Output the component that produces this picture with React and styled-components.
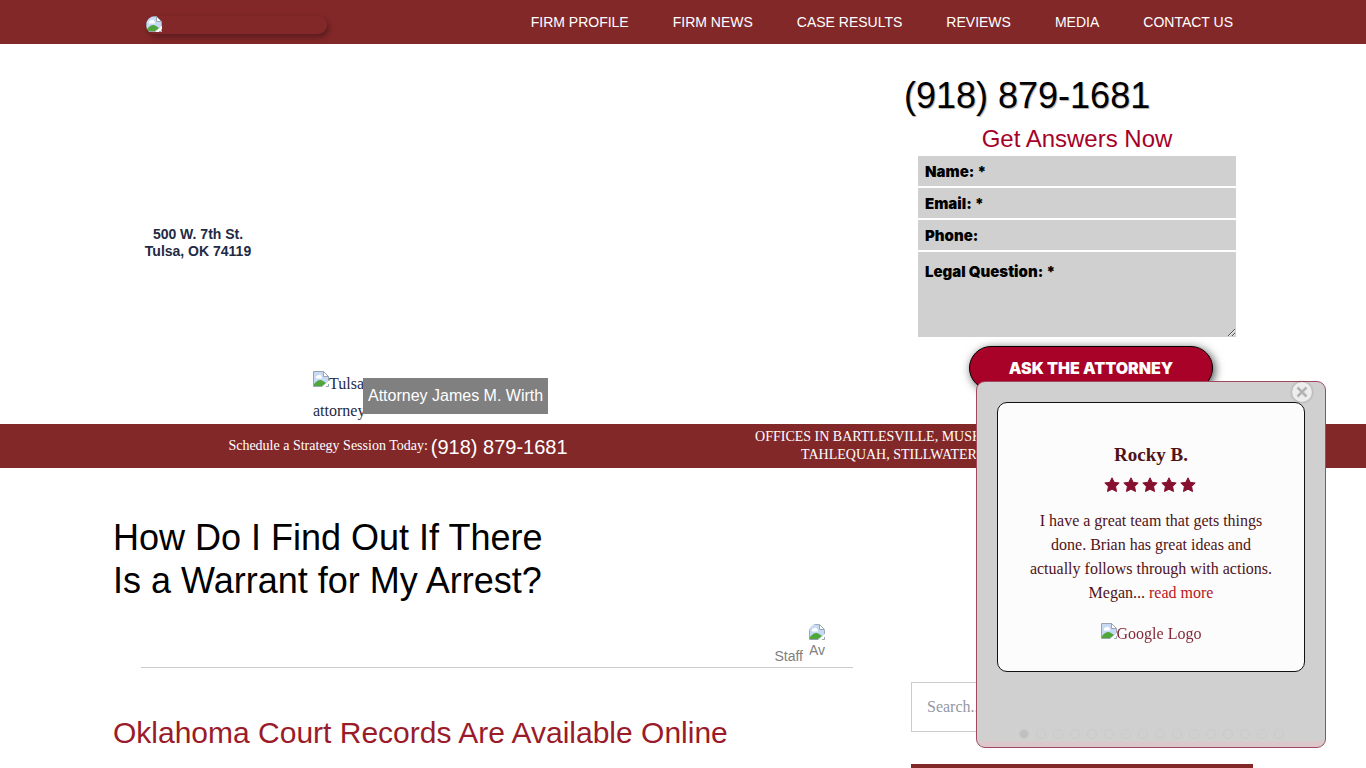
import React, { useState } from 'react';
import styled, { createGlobalStyle } from 'styled-components';

const SANS = '"Liberation Sans", Arial, sans-serif';
const SERIF = '"Liberation Serif", "Times New Roman", serif';
const HEAVY = '"Arial Black", Inter, sans-serif';

const GlobalStyle = createGlobalStyle`
  *, *::before, *::after {
    box-sizing: border-box;
  }

  body {
    margin: 0;
    background: #fff;
    color: #1f2a44;
    font-family: ${SERIF};
    font-size: 16px;
    overflow: hidden;
  }

  h1, h2, h3, p {
    margin: 0;
    font-weight: 400;
  }

  a {
    color: inherit;
    text-decoration: none;
  }
`;

const Page = styled.div`
  height: 100vh;
  overflow: hidden;
`;

const Container = styled.div`
  max-width: 1140px;
  margin: 0 auto;
`;

const Header = styled.header`
  background: #832829;
`;

const HeaderInner = styled(Container)`
  display: flex;
  align-items: center;
  justify-content: space-between;
  height: 44px;
  padding: 0 20px 0 33px;
`;

const Logo = styled.a`
  display: block;
  width: 181px;
  height: 18px;
  margin-top: 6px;
  border-radius: 10px;
  overflow: hidden;
  box-shadow: 2px 3px 6px rgba(0, 0, 0, 0.35);
`;

const Nav = styled.nav`
  display: flex;
  gap: 44px;
  color: #fff;
  font-family: ${SANS};
  font-size: 14px;
  line-height: 20px;
`;

const HeroInner = styled(Container)`
  display: grid;
  grid-template-columns: 170px 1fr 352px;
  height: 380px;
`;

const Address = styled.address`
  padding-top: 182px;
  font-family: ${SANS};
  font-size: 14px;
  font-style: normal;
  font-weight: 700;
  line-height: 17px;
  text-align: center;
`;

const Attorney = styled.div`
  display: flex;
  align-items: flex-start;
  align-self: end;
  padding-left: 30px;
`;

const AltBox = styled.div`
  width: 50px;
  line-height: 27px;
  white-space: nowrap;

  svg {
    vertical-align: 2px;
  }
`;

const AttorneyName = styled.div`
  margin-top: 8px;
  padding: 0 5px;
  background: #808080;
  color: #fff;
  font-family: ${SANS};
  font-size: 16px;
  line-height: 36px;
`;

const Contact = styled.div`
  padding-top: 30px;
`;

const BigPhone = styled.a`
  display: block;
  padding-left: 3px;
  color: #000;
  font-family: ${SANS};
  font-size: 36px;
  line-height: 44px;
  text-shadow: 1px 1px 1px #b0b0b0;
`;

const Form = styled.form`
  display: flex;
  flex-direction: column;
  gap: 2px;
  padding: 6px 17px 0;
`;

const FormTitle = styled.h3`
  color: #a50229;
  font-family: ${SANS};
  font-size: 24px;
  line-height: 30px;
  text-align: center;
`;

const Field = styled.input`
  width: 100%;
  height: 30px;
  padding: 0 7px;
  border: 0;
  border-radius: 0;
  background: #d0d0d0;
  font-family: ${HEAVY};
  font-size: 15px;
  font-weight: 900;

  &::placeholder {
    color: #000;
    opacity: 1;
  }
`;

const Question = styled(Field)`
  height: 85px;
  padding: 10px 7px;
  resize: vertical;
`;

const AskButton = styled.button`
  align-self: flex-end;
  width: 244px;
  height: 44px;
  margin: 7px 23px 0 0;
  border: 1px solid #000;
  border-radius: 22px;
  background: #a80229;
  box-shadow: 2px 2px 10px rgba(0, 0, 0, 0.7);
  color: #fff;
  font-family: ${HEAVY};
  font-size: 16px;
  font-weight: 900;
`;

const Banner = styled.section`
  background: #832829;
  color: #fff;
`;

const BannerInner = styled(Container)`
  display: flex;
  align-items: center;
  height: 44px;
  text-align: center;
`;

const Schedule = styled.p`
  display: flex;
  align-items: center;
  justify-content: center;
  gap: 3px;
  width: 50%;
  font-size: 14px;
  line-height: 24px;

  a {
    padding-top: 2px;
    font-family: ${SANS};
    font-size: 20px;
  }
`;

const Offices = styled.p`
  width: 412px;
  font-size: 14px;
  line-height: 18px;
`;

const Main = styled(Container)`
  display: grid;
  grid-template-columns: 1fr 342px;
  gap: 30px;
`;

const Title = styled.h1`
  max-width: 450px;
  padding-top: 48px;
  color: #000;
  font-family: ${SANS};
  font-size: 36px;
  line-height: 43px;
`;

const Byline = styled.div`
  display: flex;
  align-items: flex-end;
  justify-content: flex-end;
  gap: 6px;
  margin: 22px 28px 0;
  padding-right: 28px;
  border-bottom: 1px solid #ccc;
  color: #808080;
  font-family: ${SANS};
  font-size: 14px;
  line-height: 22px;
`;

const Avatar = styled.span`
  width: 16px;
  height: 36px;
  margin-bottom: 7px;
  border-radius: 8px;
  overflow: hidden;
  line-height: 20px;

  svg {
    display: block;
  }
`;

const Subtitle = styled.h2`
  margin-top: 46px;
  color: #9a1b29;
  font-family: ${SANS};
  font-size: 30px;
  line-height: 38px;
`;

const Sidebar = styled.aside`
  padding-top: 214px;
`;

const Search = styled.input`
  display: block;
  width: 100%;
  height: 50px;
  padding: 0 15px;
  border: 1px solid #ccc;
  font-family: ${SERIF};
  font-size: 16px;

  &::placeholder {
    color: #9497a3;
    opacity: 1;
  }
`;

const SidebarBar = styled.div`
  height: 60px;
  margin-top: 32px;
  background: #832829;
`;

const Popup = styled.section`
  position: fixed;
  right: 40px;
  bottom: 20px;
  width: 350px;
  padding: 20px 20px 8px;
  border: 1px solid #a04a60;
  border-radius: 9px;
  background: linear-gradient(#d0d0d0 calc(100% - 6px), #dcc8cc calc(100% - 5px));
`;

const Close = styled.button`
  position: absolute;
  top: 0;
  right: 13px;
  display: flex;
  align-items: center;
  justify-content: center;
  width: 20px;
  height: 20px;
  padding: 0;
  border: 0;
  border-radius: 50%;
  background: #ededed;
  box-shadow: 0 0 3px rgba(0, 0, 0, 0.3);
`;

const Card = styled.div`
  height: 270px;
  padding: 39px 20px 0;
  border: 1px solid #111;
  border-radius: 10px;
  background: #fcfcfc;
  color: #4f1218;
  text-align: center;
`;

const Reviewer = styled.h3`
  font-size: 19px;
  font-weight: 700;
  line-height: 26px;
`;

const Stars = styled.div`
  display: flex;
  justify-content: center;
  margin: 9px 0 16px;

  svg {
    margin-right: 3px;
  }
`;

const ReviewText = styled.p`
  padding: 0 10px;
  line-height: 24px;

  a {
    color: #b8141a;
  }
`;

const Source = styled.div`
  margin-top: 17px;
  color: #832a38;
  line-height: 24px;
`;

const Dots = styled.div`
  display: flex;
  justify-content: center;
  gap: 7px;
  margin-top: 57px;
`;

const Dot = styled.span`
  width: 10px;
  height: 10px;
  border: 1px solid #c9c9c9;
  border-radius: 50%;
  background: ${props => props.$active ? '#c0c0c0' : 'transparent'};
`;

const links = ['Firm Profile', 'Firm News', 'Case Results', 'Reviews', 'Media', 'Contact Us'];

const MissingImage = () => (
  <svg width="16" height="16" viewBox="0 0 16 16" aria-hidden="true">
    <path d="M.5.5h10l5 5v5l-6 5H.5z" fill="#c6d9f5" stroke="#9aa4ae" />
    <path d="M10.500.5v5h5z" fill="#fff" stroke="#9aa4ae" />
    <path d="M3 7.500a2 2 0 0 1 1.500-3 2.300 2.300 0 0 1 4 1 1.300 1.300 0 0 1 0 2z" fill="#fff" />
    <path d="M1 15v-2q5-6 9-3l3 2-4 3z" fill="#4fa63a" />
    <path d="M9 16l7-6.500V16z" fill="#fff" />
    <path d="M13 15.500h2.500V13" fill="none" stroke="#9aa4ae" />
  </svg>
);

const Star = () => (
  <svg width="16" height="16" viewBox="0 0 16 16" aria-hidden="true">
    <path
      d="M8 .8l2.200 4.500 5 .7-3.600 3.500.9 5L8 12.200l-4.500 2.300.9-5L.8 6l5-.7z"
      fill="#86102f"
      stroke="#86102f"
      strokeLinejoin="round"
    />
  </svg>
);

function App() {
  const [isPopupOpen, setIsPopupOpen] = useState(true);

  return (
    <Page>
      <GlobalStyle />
      <Header>
        <HeaderInner>
          <Logo href="#" aria-label="Home">
            <MissingImage />
          </Logo>
          <Nav>
            {links.map((link) => (
              <a key={link} href="#">{link.toUpperCase()}</a>
            ))}
          </Nav>
        </HeaderInner>
      </Header>

      <HeroInner>
        <Address>
          500 W. 7th St.
          <br />
          Tulsa, OK 74119
        </Address>
        <Attorney>
          <AltBox>
            <MissingImage />
            Tulsa
            <br />
            attorney
          </AltBox>
          <AttorneyName>Attorney James M. Wirth</AttorneyName>
        </Attorney>
        <Contact>
          <BigPhone href="tel:9188791681">(918) 879-1681</BigPhone>
          <Form onSubmit={(e) => e.preventDefault()}>
            <FormTitle>Get Answers Now</FormTitle>
            <Field type="text" aria-label="Name" placeholder="Name: *" />
            <Field type="email" aria-label="Email" placeholder="Email: *" />
            <Field type="tel" aria-label="Phone" placeholder="Phone:" />
            <Question as="textarea" aria-label="Legal Question" placeholder="Legal Question: *" />
            <AskButton type="submit">ASK THE ATTORNEY</AskButton>
          </Form>
        </Contact>
      </HeroInner>

      <Banner>
        <BannerInner>
          <Schedule>
            Schedule a Strategy Session Today: <a href="tel:9188791681">(918) 879-1681</a>
          </Schedule>
          <Offices>
            OFFICES IN BARTLESVILLE, MUSKOGEE,
            <br />
            TAHLEQUAH, STILLWATER
          </Offices>
        </BannerInner>
      </Banner>

      <Main as="main">
        <article>
          <Title>How Do I Find Out If There Is a Warrant for My Arrest?</Title>
          <Byline>
            <span>Staff</span>
            <Avatar>
              <MissingImage />
              Av
            </Avatar>
          </Byline>
          <Subtitle>Oklahoma Court Records Are Available Online</Subtitle>
        </article>
        <Sidebar>
          <Search type="search" aria-label="Search" placeholder="Search..." />
          <SidebarBar />
        </Sidebar>
      </Main>

      {isPopupOpen && (
        <Popup>
          <Close type="button" aria-label="Close" onClick={() => setIsPopupOpen(false)}>
            <svg width="12" height="12" viewBox="0 0 12 12">
              <path d="M1.500 1.500l9 9M10.500 1.500l-9 9" stroke="#b3b3b3" strokeWidth="2.500" />
            </svg>
          </Close>
          <Card>
            <Reviewer>Rocky B.</Reviewer>
            <Stars>
              {[1, 2, 3, 4, 5].map((n) => <Star key={n} />)}
            </Stars>
            <ReviewText>
              I have a great team that gets things done. Brian has great ideas and
              actually follows through with actions. Megan... <a href="#">read more</a>
            </ReviewText>
            <Source>
              <MissingImage />
              Google Logo
            </Source>
          </Card>
          <Dots>
            {Array.from({ length: 16 }, (_, i) => (
              <Dot key={i} $active={i === 0} />
            ))}
          </Dots>
        </Popup>
      )}
    </Page>
  );
}

export default App;
